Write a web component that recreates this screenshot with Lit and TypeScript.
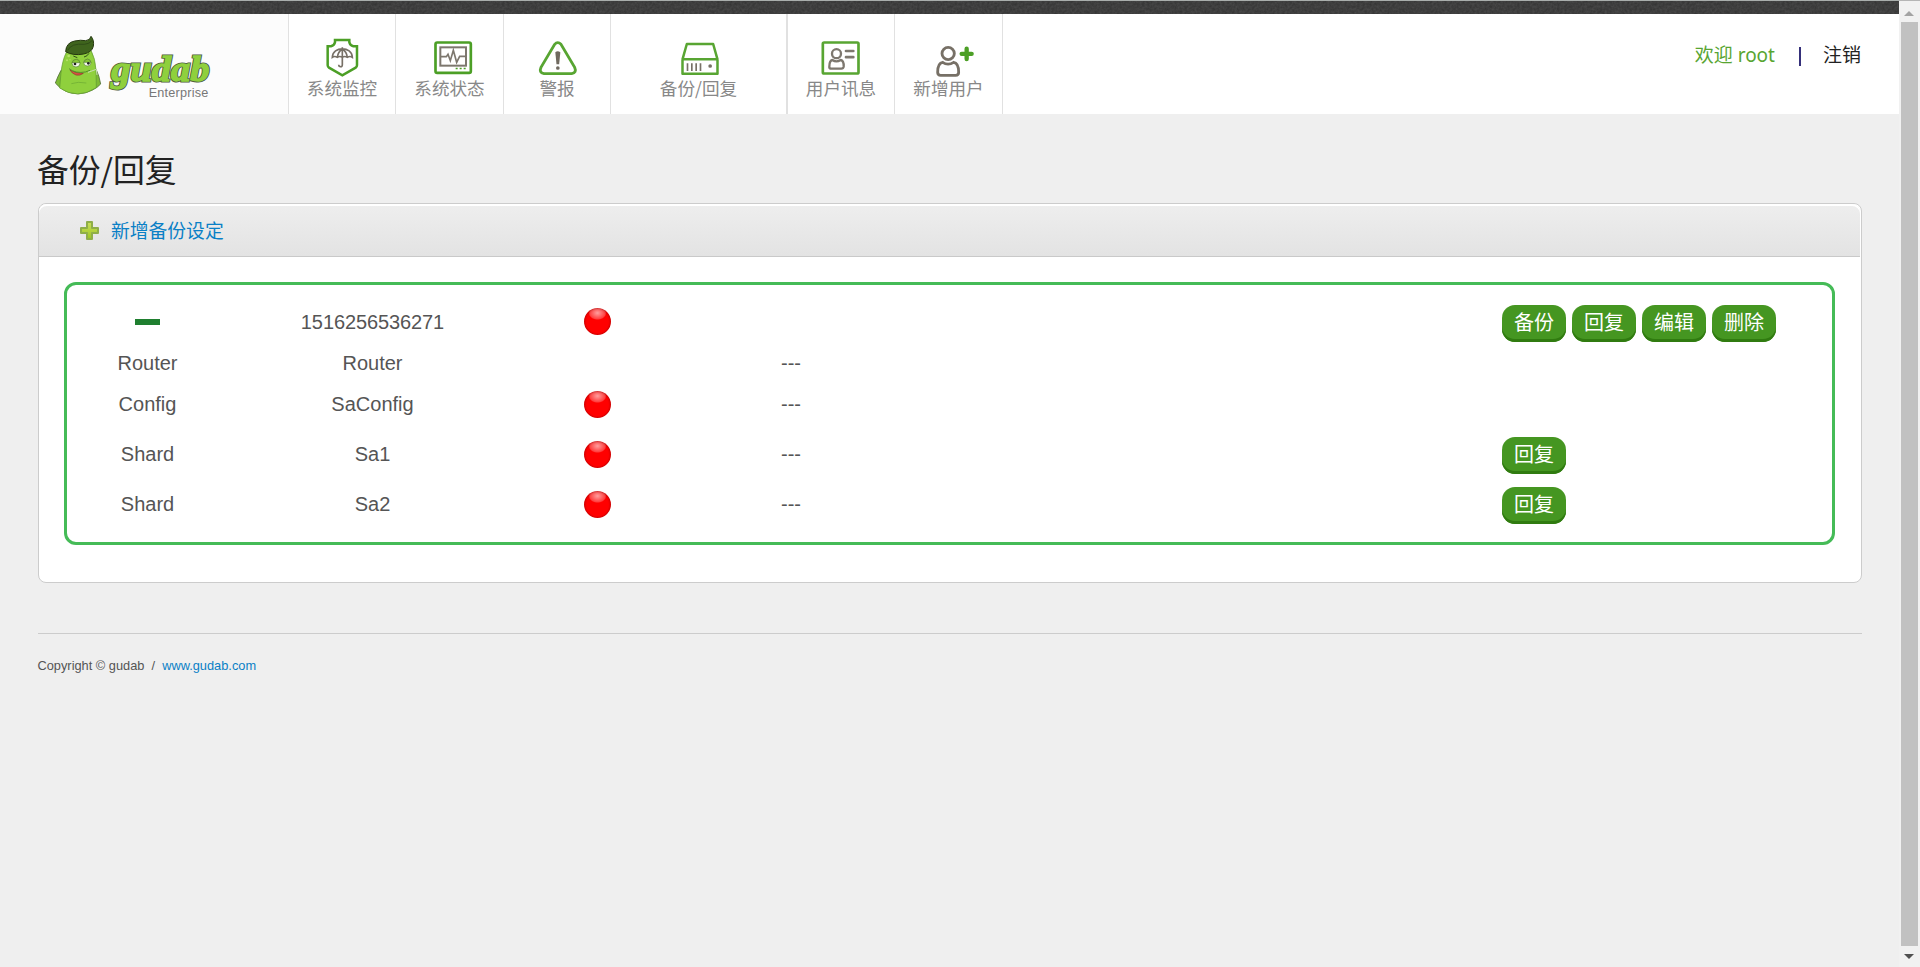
import { LitElement, html, svg, css, nothing } from "lit";
import { customElement } from "lit/decorators.js";

const navItems = [
  {
    label: "系统监控", cls: "w1", box: "106 114 160 120",
    icon: svg`
      <path d="M166 120 H209 V127 Q211 137 221 139 H232 V196 Q232 200 228 203 L188 226 L148 203 Q144 200 144 196 V139 H154 Q164 137 166 127 Z" fill="none" stroke="#4c9f26" stroke-width="7.5"/>
      <path d="M158 172 C159 138 217 138 218 172 Q211 167 203 172 Q195 167 188 172 Q180 167 173 172 Q165 167 158 172 Z M188 142 V148 M188 148 C178 154 174 163 173 172 M188 148 C198 154 202 163 203 172 M188 148 V194 Q188 201 182 200 Q177 199 177 194" fill="none" stroke="#777066" stroke-width="5"/>`,
  },
  {
    label: "系统状态", cls: "w2", box: "428 114 160 120",
    icon: svg`
      <rect x="465.5" y="127.500" width="106" height="91" rx="5" fill="none" stroke="#4c9f26" stroke-width="8"/>
      <rect x="480" y="142" width="77" height="55" fill="none" stroke="#7d776e" stroke-width="6"/>
      <path d="M482 170 H498 L503 163 L510 182 L519 151 L529 187 L538 169 H555" fill="none" stroke="#7d776e" stroke-width="5"/>
      <path d="M526 205.500h6M538 205.500h6M550 205.500h6" stroke="#4c9f26" stroke-width="5"/>`,
  },
  {
    label: "警报", cls: "w3", box: "751 114 160 120",
    icon: svg`
      <path d="M825 133 Q834 123 844 133 L885 202 Q892 218 876 221 H793 Q777 218 784 202 Z" fill="none" stroke="#58a532" stroke-width="8.5"/>
      <path d="M827 157 Q834 151 842 157 L838.500 193 H830.500 Z" fill="#6f695f"/><circle cx="834.500" cy="204" r="5.500" fill="#6f695f"/>`,
  },
  {
    label: "备份/回复", cls: "w4", box: "155.500 114 160 120",
    icon: svg`
      <path d="M187 178 L200 132 H279 L292 178 M187 178 V221 H292 V178 Z" fill="none" stroke="#58a532" stroke-width="7.5" stroke-linejoin="round"/>
      <path d="M202 190V213M215 190V213M228 190V213M241 190V213" stroke="#777066" stroke-width="5"/><circle cx="270" cy="198" r="5.500" fill="#777066"/>`,
  },
  {
    label: "用户讯息", cls: "w5", box: "583 114 160 120",
    icon: svg`
      <rect x="609.500" y="127.500" width="107" height="93" rx="4" fill="none" stroke="#58a532" stroke-width="8"/>
      <circle cx="650.500" cy="161" r="13.500" fill="none" stroke="#7d776e" stroke-width="7"/>
      <path d="M638 180 Q650 188 663 180 Q673 182 672 200 Q671 206 665 206 H635 Q628 206 629 200 Q629 182 638 180 Z" fill="none" stroke="#7d776e" stroke-width="7"/>
      <path d="M679 153H701M679 171.500H701" stroke="#7d776e" stroke-width="8" stroke-linecap="round"/>`,
  },
  {
    label: "新增用户", cls: "w6", box: "907 114 160 120",
    icon: svg`
      <circle cx="985.500" cy="160.500" r="18.500" fill="none" stroke="#777066" stroke-width="8.5"/>
      <path d="M969 187 Q985 198 1002 187 Q1017 189 1017 217 Q1017 226 1008 226 H963 Q954 226 954 217 Q954 189 969 187 Z" fill="none" stroke="#777066" stroke-width="8.5"/>
      <path d="M1041 146V177M1026 161.500H1056" stroke="#4c9f26" stroke-width="13" stroke-linecap="round"/>`,
  },
];

const members = [
  { kind: "Router", name: "Router", status: false, restore: false },
  { kind: "Config", name: "SaConfig", status: true, restore: false },
  { kind: "Shard", name: "Sa1", status: true, restore: true },
  { kind: "Shard", name: "Sa2", status: true, restore: true },
];

@customElement("app-root")
class AppRoot extends LitElement {
  static styles = css`
    :host {
      display: flex;
      height: 967px;
      background: #efefef;
      color: #555;
      font-family: "Liberation Sans", "Noto Sans CJK SC", sans-serif;
    }
    * { box-sizing: border-box; }
    svg { display: block; }
    .page { flex: 1; min-width: 0; }
    .strip { height: 14px; border-top: 1px solid #a9aeac; background: #3c3c3c; overflow: hidden; }
    .grain { width: 100%; height: 13px; }
    header { display: flex; height: 100px; background: #fff; }
    .logo { width: 289px; padding: 19px 0 0 50px; background: #fcfcfc; border-right: 1px solid #e1e1e1; }
    .brand { font: italic 900 108px "Liberation Serif", serif; }
    .edition { font: 38px "Liberation Sans", sans-serif; }
    .item {
      padding-top: 24px; border-right: 1px solid #e1e1e1; text-align: center;
      font: 17.6px/20px "Noto Sans CJK SC", sans-serif; color: #888; white-space: nowrap;
    }
    .item svg { margin: 0 auto; }
    .w1 { width: 107px; }
    .w2 { width: 108px; }
    .w3 { width: 107px; }
    .w4 { width: 177px; border-right-width: 2px; }
    .w5 { width: 107px; }
    .w6 { width: 108px; }
    .user {
      display: flex; margin-left: auto; padding: 27px 38px 0 0;
      font: 19px/28px "Noto Sans", "Noto Sans CJK SC", sans-serif; color: #222;
    }
    .hello { color: #58a532; }
    .bar { width: 2px; height: 19px; margin: 6px 22px 0 24px; background: #35307a; }
    main { padding: 31px 37px 0 38px; }
    h2 { margin: 0 0 0 -1px; height: 58px; font: 31.8px/46px "Noto Sans CJK SC", sans-serif; color: #222; }
    .panel { height: 380px; border: 1px solid #ccc; border-radius: 8px; background: #fff; }
    .head {
      display: flex; align-items: center; height: 53px; margin-right: 1px; padding-left: 40px;
      border-bottom: 1px solid #c9c9c9; border-radius: 8px 8px 0 0;
      background: linear-gradient(#eeeeee, #e3e3e3); box-shadow: inset 0 2px #fff;
    }
    .add {
      margin-left: 11px; font: 18.8px/28px "Noto Sans CJK SC", sans-serif; color: #0a80c6;
    }
    .cluster { height: 263px; margin: 25px 26px 0 25px; padding-top: 16px; border: 3px solid #45bb57; border-radius: 12px; }
    .row {
      display: grid; grid-template-columns: 161px 289px 161px 226px 1fr 330px;
      align-items: center; height: 41px; font-size: 20px; line-height: 24px; text-align: center;
    }
    .tall { height: 50px; }
    .gap { margin-top: 5px; }
    .stamp { letter-spacing: -.1px; }
    .minus { width: 25px; height: 6px; margin: 0 auto; background: #1f7f2f; }
    .dot {
      width: 27px; height: 27px; margin: 0 auto; border-radius: 50%;
      background:
        radial-gradient(ellipse 9px 7px at 50% 5px, rgba(255,255,255,.62), rgba(255,255,255,.25) 85%, transparent),
        radial-gradient(circle at 50% 52%, #f00 55%, #b80000 100%);
      box-shadow: inset 0 0 2px #a00000;
    }
    .member .dot { margin: 1px auto -1px; }
    .tall .dot { margin: 0 auto; }
    .actions { grid-column: 6; display: flex; gap: 6px; padding-top: 3px; }
    button {
      width: 64px; height: 37px; padding: 0 0 3px; border: 0; border-radius: 13px;
      background: #459621; box-shadow: inset 0 -3px #307b10; color: #fff;
      font: 20px/34px "Noto Sans CJK SC", sans-serif;
    }
    footer { margin-top: 50px; padding-top: 24px; border-top: 1px solid #ccc; font-size: 12.8px; line-height: 16px; white-space: pre; text-indent: -.5px; }
    .link { color: #0a80c6; }
    .scroll { display: flex; flex-direction: column; align-items: center; justify-content: space-between; width: 21px; padding: 10px 1px 8px 0; background: #f1f1f1; border-top: 1px solid #b5b5b5; }
    .up, .down { border: 5px solid transparent; border-top: 0; border-bottom: 5px solid #a3a3a3; }
    .down { border-top: 5px solid #505050; border-bottom: 0; }
    .thumb { width: 17px; height: 924px; margin: 6px 0 auto; background: #c1c1c1; }
  `;

  private row(m: (typeof members)[number], i: number) {
    return html`<div class="row member ${m.restore ? "tall" : ""} ${i === 2 ? "gap" : ""}">
      <div>${m.kind}</div>
      <div>${m.name}</div>
      <div>${m.status ? html`<div class="dot"></div>` : nothing}</div>
      <div>---</div>
      ${m.restore ? html`<div class="actions"><button>回复</button></div>` : nothing}
    </div>`;
  }

  render() {
    return html`
      <div class="page">
        <div class="strip">
          <svg class="grain">
            <filter id="grain" color-interpolation-filters="sRGB"><feTurbulence type="fractalNoise" baseFrequency="0.4" numOctaves="2"/><feColorMatrix values="0.11 0 0 0 0.19  0.11 0 0 0 0.19  0.11 0 0 0 0.19  0 0 0 0 1"/></filter>
            <rect width="100%" height="100%" filter="url(#grain)"/>
          </svg>
        </div>
        <header>
          <div class="logo">
            <svg width="164" height="67" viewBox="150 99 492 201">
              <path d="M183 211 Q172 232 166 249 Q176 262 196 273 Q235 291 276 271 Q294 262 302 252 Q298 228 288 207 Z" fill="#7dbb35" stroke="#526f39" stroke-width="2.500"/>
              <path d="M199 157 Q187 181 183 218 L179 264 Q232 300 289 263 L288 210 Q286 175 273 151 Q235 133 199 157Z" fill="#8fd03d" stroke="#5d9630" stroke-width="2"/>
              <path d="M197 155 Q198 128 224 123 Q242 119 257 122 Q271 121 273 109 Q283 120 280 139 Q276 157 251 162 Q219 168 197 155Z" fill="#3f641d" stroke="#24380f" stroke-width="3"/>
              <path d="M203 151 Q214 129 253 133 Q268 132 276 122" fill="none" stroke="#2f4d17" stroke-width="3"/>
              <ellipse cx="228" cy="190" rx="12" ry="11" fill="#f4f8ed" stroke="#55822c" stroke-width="2"/>
              <ellipse cx="262" cy="188" rx="11" ry="10" fill="#f4f8ed" stroke="#55822c" stroke-width="2"/>
              <path d="M216 188 Q219 178 229 178 Q238 178 240 188ZM251 187 Q255 177 263 177 Q271 178 273 187Z" fill="#86c638" stroke="#55822c" stroke-width="2"/>
              <circle cx="225" cy="192" r="4" fill="#222"/><circle cx="265" cy="190" r="4" fill="#222"/>
              <path d="M220 168 L232 173 M252 171 Q262 169 267 160" fill="none" stroke="#304d18" stroke-width="3"/>
              <path d="M210 210 Q226 220 250 220 Q240 228 228 225 Q216 221 210 210Z" fill="#d85343" stroke="#8e342c" stroke-width="2"/>
              <path d="M207 206 Q226 221 256 216 L270 211" fill="none" stroke="#55912a" stroke-width="3"/>
              <path d="M214 251 Q234 244 259 249" fill="none" stroke="#6aa732" stroke-width="2"/>
              <path d="M264 217 L289 208 L291 225" fill="none" stroke="#c9dfb5" stroke-width="3"/>
              <g fill="#b8e36b"><circle cx="206" cy="168" r="4"/><circle cx="201" cy="181" r="3"/><circle cx="210" cy="179" r="2"/></g>
              <text class="brand" x="334" y="243" textLength="294" lengthAdjust="spacingAndGlyphs" fill="#4d5944" stroke="#4d5944" stroke-width="9">gudab</text>
              <text class="brand" x="334" y="243" textLength="294" lengthAdjust="spacingAndGlyphs" fill="#8fd03d" stroke="#8fd03d" stroke-width="4">gudab</text>
              <text class="edition" x="446" y="290" textLength="179" fill="#777">Enterprise</text>
            </svg>
          </div>
          ${navItems.map((n) => html`<div class="item ${n.cls}"><svg width="53.33" height="40" viewBox=${n.box}>${n.icon}</svg>${n.label}</div>`)}
          <div class="user"><span class="hello">欢迎 root</span><span class="bar"></span><span>注销</span></div>
        </header>
        <main>
          <h2>备份/回复</h2>
          <section class="panel">
            <div class="head">
              <svg width="21" height="21" viewBox="0 0 21 21">
                <defs><linearGradient id="lime" x2="0" y2="1"><stop stop-color="#cbe05a"/><stop offset="1" stop-color="#9cc522"/></linearGradient></defs>
                <path d="M8 2h5v6h6v5h-6v6h-5v-6h-6v-5h6z" fill="url(#lime)" stroke="#8fae48" stroke-width="2" stroke-linejoin="round"/>
              </svg>
              <span class="add">新增备份设定</span>
            </div>
            <div class="cluster">
              <div class="row">
                <div><div class="minus"></div></div>
                <div class="stamp">1516256536271</div>
                <div><div class="dot"></div></div>
                <div class="actions"><button>备份</button><button>回复</button><button>编辑</button><button>删除</button></div>
              </div>
              ${members.map((m, i) => this.row(m, i))}
            </div>
          </section>
          <footer>Copyright © gudab  /  <span class="link">www.gudab.com</span></footer>
        </main>
      </div>
      <div class="scroll"><div class="up"></div><div class="thumb"></div><div class="down"></div></div>
    `;
  }
}
